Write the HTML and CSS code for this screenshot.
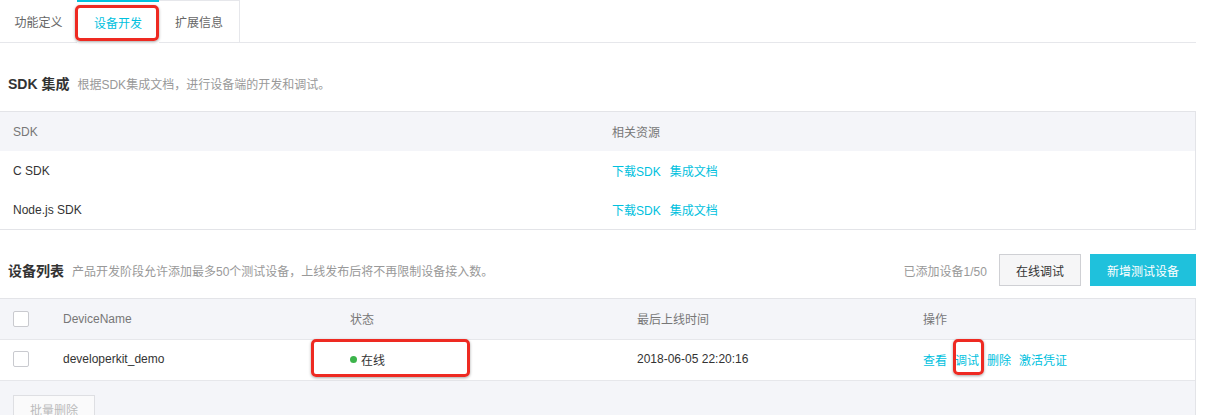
FILE: index.html
```html
<!DOCTYPE html>
<html lang="zh-CN">
<head>
<meta charset="utf-8">
<title>设备开发</title>
<link rel="stylesheet" href="styles.css">
</head>
<body>
<div class="page">
  <div class="tabs">
    <div class="tab">功能定义</div>
    <div class="tab active">设备开发</div>
    <div class="tab last">扩展信息</div>
  </div>

  <div class="section-head">
    <h2 class="title">SDK 集成</h2>
    <span class="desc">根据SDK集成文档，进行设备端的开发和调试。</span>
  </div>

  <div class="table sdk-table">
    <div class="row head">
      <div class="cell">SDK</div>
      <div class="cell">相关资源</div>
    </div>
    <div class="row">
      <div class="cell">C SDK</div>
      <div class="cell links"><a>下载SDK</a><a>集成文档</a></div>
    </div>
    <div class="row">
      <div class="cell">Node.js SDK</div>
      <div class="cell links"><a>下载SDK</a><a>集成文档</a></div>
    </div>
  </div>

  <div class="section-head">
    <h2 class="title">设备列表</h2>
    <span class="desc">产品开发阶段允许添加最多50个测试设备，上线发布后将不再限制设备接入数。</span>
    <div class="actions">
      <span class="count">已添加设备1/50</span>
      <button class="btn">在线调试</button>
      <button class="btn primary">新增测试设备</button>
    </div>
  </div>

  <div class="table dev-table">
    <div class="drow head">
      <div class="dcell chk"><span class="checkbox"></span></div>
      <div class="dcell">DeviceName</div>
      <div class="dcell">状态</div>
      <div class="dcell">最后上线时间</div>
      <div class="dcell">操作</div>
    </div>
    <div class="drow body">
      <div class="dcell chk"><span class="checkbox"></span></div>
      <div class="dcell">developerkit_demo</div>
      <div class="dcell"><span class="dot"></span>在线</div>
      <div class="dcell">2018-06-05 22:20:16</div>
      <div class="dcell ops"><a>查看</a><a>调试</a><a>删除</a><a>激活凭证</a></div>
    </div>
    <div class="footer">
      <button class="btn disabled">批量删除</button>
    </div>
  </div>

  <div class="mark mark-tab"></div>
  <div class="mark mark-status"></div>
  <div class="mark mark-debug"></div>
</div>
</body>
</html>
```
FILE: styles.css
```css
* { box-sizing: border-box; }
html, body { margin: 0; padding: 0; background: #fff; }
body {
  font-family: "Liberation Sans", "Noto Sans CJK SC", sans-serif;
  font-size: 12px;
  color: #333;
  overflow: hidden;
}
.page {
  position: relative;
  width: 1196px;
  height: 415px;
  overflow: hidden;
}

/* tabs */
.tabs {
  display: flex;
  height: 43px;
  border-bottom: 1px solid #e6e7eb;
}
.tab {
  width: 81px;
  height: 42px;
  display: flex;
  align-items: center;
  justify-content: center;
  color: #666;
  font-size: 12px;
}
.tab:first-child { width: 77px; }
.tab.active {
  width: 82px;
  color: #00c1de;
  border-top: 2px solid #00c1de;
  height: 43px;
  background: #fff;
  padding-bottom: 1px;
  position: relative;
  z-index: 1;
}
.tab.last {
  border-top: 1px solid #e6e7eb;
  border-right: 1px solid #e6e7eb;
}

/* section headers */
.section-head {
  display: flex;
  align-items: center;
  height: 32px;
  margin: 24px 0 12px;
  padding-left: 8px;
}
.title {
  margin: 0;
  font-size: 14px;
  font-weight: bold;
  color: #333;
}
.desc {
  margin-left: 8px;
  color: #999;
  font-size: 12px;
}
.actions {
  margin-left: auto;
  display: flex;
  align-items: center;
}
.count { color: #999; margin-right: 12px; }
.btn {
  font-family: inherit;
  font-size: 12px;
  height: 32px;
  padding: 0 16px;
  border: 1px solid #cfd0d4;
  background: #f6f6f7;
  color: #333;
  cursor: pointer;
}
.btn + .btn { margin-left: 9px; }
.btn.primary {
  background: #1fc1dc;
  border-color: #1fc1dc;
  color: #fff;
}
.btn.disabled {
  height: 28px;
  width: 82px;
  padding: 0;
  color: #bbb;
  background: #fafafb;
  border-color: #dedfe3;
  margin-top: 14px;
  margin-left: 13px;
}

/* tables */
.table {
  border-top: 1px solid #e3e4e8;
  border-right: 1px solid #e3e4e8;
}
.sdk-table { border-bottom: 1px solid #e3e4e8; }
.row {
  display: grid;
  grid-template-columns: 599px 1fr;
  height: 39px;
  align-items: center;
}
.row.head { background: #f4f5f9; color: #777; }
.cell { padding-left: 13px; }
.links a { color: #00c1de; margin-right: 9px; cursor: pointer; }

.drow {
  display: grid;
  grid-template-columns: 50px 287px 287px 286px 1fr;
  align-items: center;
  height: 40px;
}
.drow.head { background: #f4f5f9; color: #777; height: 40px; padding-bottom: 1px; }
.drow.body { border-top: 1px solid #e6e7eb; height: 41px; padding-bottom: 2px; }
.dcell { padding-left: 13px; display: flex; align-items: center; }
.dcell.chk { padding-left: 13px; }
.checkbox {
  display: inline-block;
  width: 16px;
  height: 16px;
  border: 1px solid #c9cacf;
  border-radius: 2px;
  background: #fff;
}
.dot {
  display: inline-block;
  width: 7px;
  height: 7px;
  border-radius: 50%;
  background: #3cb44b;
  margin-right: 4px;
}
.ops a { color: #00c1de; margin-right: 8px; cursor: pointer; }
.footer {
  border-top: 1px solid #e6e7eb;
  background: #f4f5f9;
  height: 60px;
}

/* red annotation boxes */
.mark {
  position: absolute;
  border: 3px solid #ee2a22;
  border-radius: 5px;
  box-shadow: 0 1px 3px rgba(0, 0, 0, 0.35);
  z-index: 5;
}
.mark-tab { left: 75px; top: 5px; width: 84px; height: 36px; }
.mark-status { left: 311px; top: 339px; width: 159px; height: 38px; }
.mark-debug { left: 953px; top: 339px; width: 31px; height: 36px; }
```
